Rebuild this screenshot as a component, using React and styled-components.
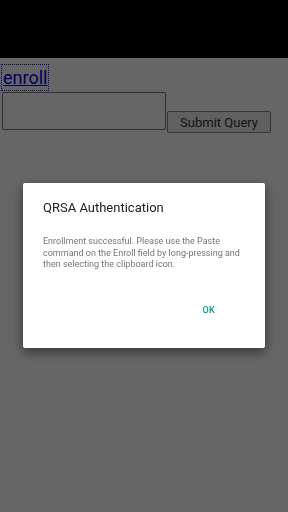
import React from "react";
import styled, { createGlobalStyle } from "styled-components";

const Global = createGlobalStyle`
  html, body {
    margin: 0;
    padding: 0;
    background: #fff;
    font-family: Roboto, "Liberation Sans", sans-serif;
  }
  body {
    width: 288px;
    height: 512px;
    overflow: hidden;
  }
`;

const StatusBar = styled.div`
  height: 58px;
  background: #000;
`;

const Page = styled.div`
  padding: 7px 2px 0;
`;

const EnrollLink = styled.a`
  display: inline-block;
  font-size: 18px;
  line-height: 25px;
  color: #0000ee;
  text-decoration: underline;
  outline: 1px dotted #0000ee;
  padding: 0 1px;
`;

const Form = styled.form`
  display: flex;
  align-items: flex-end;
  margin-top: 2px;
`;

const Field = styled.input`
  width: 164px;
  height: 38px;
  box-sizing: border-box;
  border: 1px solid #767676;
  border-radius: 2px;
  margin: 0;
`;

const SubmitButton = styled.button`
  margin: 0 0 -3px 1px;
  width: 104px;
  height: 22px;
  box-sizing: border-box;
  font-family: Roboto, "Liberation Sans", sans-serif;
  font-size: 13px;
  color: #333;
  background: #efefef;
  border: 1px solid #888;
  border-radius: 2px;
  padding: 0;
`;

const Scrim = styled.div`
  position: fixed;
  inset: 0;
  background: rgba(0, 0, 0, 0.6);
`;

const Dialog = styled.div`
  position: fixed;
  left: 23px;
  top: 183px;
  width: 242px;
  height: 165px;
  box-sizing: border-box;
  background: #fff;
  border-radius: 2px;
  box-shadow: 0 4px 12px rgba(0, 0, 0, 0.5);
  padding: 16px 12px 0 20px;
  display: flex;
  flex-direction: column;
`;

const Title = styled.h2`
  margin: 0;
  font-size: 13px;
  font-weight: 400;
  line-height: 18px;
  color: #212121;
`;

const Message = styled.p`
  margin: 19px 0 0;
  max-width: 205px;
  font-size: 9px;
  line-height: 11.7px;
  color: #757575;
`;

const Actions = styled.div`
  display: flex;
  justify-content: flex-end;
  margin-top: 34px;
  padding-right: 38px;
`;

const OkButton = styled.button`
  background: none;
  border: none;
  padding: 0;
  font-family: Roboto, "Liberation Sans", sans-serif;
  font-size: 9px;
  font-weight: 500;
  color: #009688;
  letter-spacing: 0.3px;
`;

export default function App() {
  return (
    <>
      <Global />
      <StatusBar />
      <Page>
        <EnrollLink href="#">enroll</EnrollLink>
        <Form onSubmit={(e) => e.preventDefault()}>
          <Field type="text" />
          <SubmitButton type="submit">Submit Query</SubmitButton>
        </Form>
      </Page>
      <Scrim />
      <Dialog>
        <Title>QRSA Authentication</Title>
        <Message>
          Enrollment successful. Please use the Paste command on the Enroll
          field by long-pressing and then selecting the clipboard icon.
        </Message>
        <Actions>
          <OkButton>OK</OkButton>
        </Actions>
      </Dialog>
    </>
  );
}
